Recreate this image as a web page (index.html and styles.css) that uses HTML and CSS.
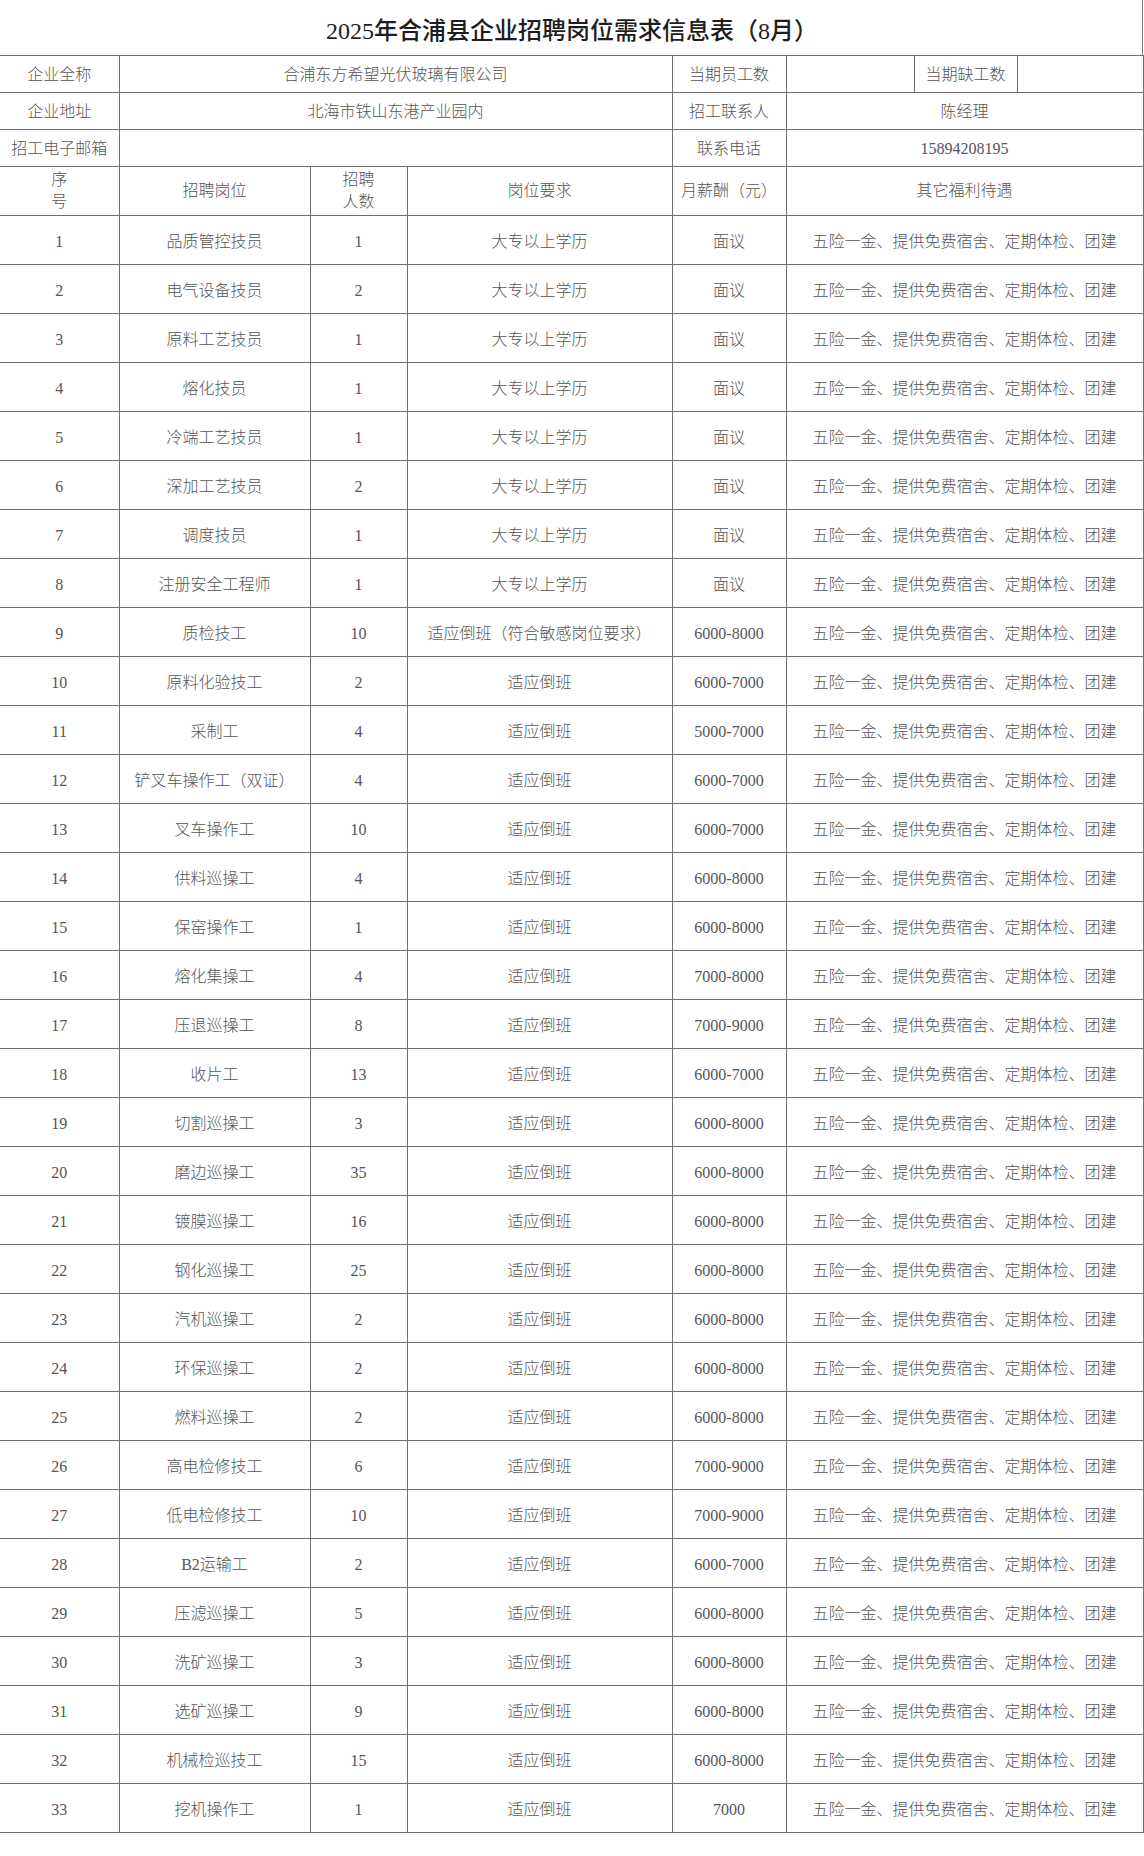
FILE: index.html
```html
<!DOCTYPE html>
<html lang="zh-CN">
<head>
<meta charset="utf-8">
<title>2025年合浦县企业招聘岗位需求信息表（8月）</title>
<link rel="stylesheet" href="styles.css">
</head>
<body>
<div class="page">
  <h1 class="title">2025年合浦县企业招聘岗位需求信息表（8月）</h1>
  <table class="sheet">
    <colgroup>
      <col class="c1"><col class="c2"><col class="c3"><col class="c4"><col class="c5"><col class="c6"><col class="c7"><col class="c8">
    </colgroup>
    <tbody>
      <tr class="info">
        <td class="first">企业全称</td>
        <td colspan="3">合浦东方希望光伏玻璃有限公司</td>
        <td>当期员工数</td>
        <td></td>
        <td>当期缺工数</td>
        <td></td>
      </tr>
      <tr class="info">
        <td class="first">企业地址</td>
        <td colspan="3">北海市铁山东港产业园内</td>
        <td>招工联系人</td>
        <td colspan="3">陈经理</td>
      </tr>
      <tr class="info">
        <td class="first">招工电子邮箱</td>
        <td colspan="3"></td>
        <td>联系电话</td>
        <td colspan="3" class="num">15894208195</td>
      </tr>
      <tr class="head">
        <td class="first two">序<br>号</td>
        <td>招聘岗位</td>
        <td class="soft two">招聘<br>人数</td>
        <td class="soft">岗位要求</td>
        <td>月薪酬（元）</td>
        <td colspan="3">其它福利待遇</td>
      </tr>
      <tr><td class="first">1</td><td>品质管控技员</td><td class="soft">1</td><td class="soft">大专以上学历</td><td>面议</td><td colspan="3">五险一金、提供免费宿舍、定期体检、团建</td></tr>
      <tr><td class="first">2</td><td>电气设备技员</td><td class="soft">2</td><td class="soft">大专以上学历</td><td>面议</td><td colspan="3">五险一金、提供免费宿舍、定期体检、团建</td></tr>
      <tr><td class="first">3</td><td>原料工艺技员</td><td class="soft">1</td><td class="soft">大专以上学历</td><td>面议</td><td colspan="3">五险一金、提供免费宿舍、定期体检、团建</td></tr>
      <tr><td class="first">4</td><td>熔化技员</td><td class="soft">1</td><td class="soft">大专以上学历</td><td>面议</td><td colspan="3">五险一金、提供免费宿舍、定期体检、团建</td></tr>
      <tr><td class="first">5</td><td>冷端工艺技员</td><td class="soft">1</td><td class="soft">大专以上学历</td><td>面议</td><td colspan="3">五险一金、提供免费宿舍、定期体检、团建</td></tr>
      <tr><td class="first">6</td><td>深加工艺技员</td><td class="soft">2</td><td class="soft">大专以上学历</td><td>面议</td><td colspan="3">五险一金、提供免费宿舍、定期体检、团建</td></tr>
      <tr><td class="first">7</td><td>调度技员</td><td class="soft">1</td><td class="soft">大专以上学历</td><td>面议</td><td colspan="3">五险一金、提供免费宿舍、定期体检、团建</td></tr>
      <tr><td class="first">8</td><td>注册安全工程师</td><td class="soft">1</td><td class="soft">大专以上学历</td><td>面议</td><td colspan="3">五险一金、提供免费宿舍、定期体检、团建</td></tr>
      <tr><td class="first">9</td><td>质检技工</td><td class="soft">10</td><td class="soft">适应倒班（符合敏感岗位要求）</td><td>6000-8000</td><td colspan="3">五险一金、提供免费宿舍、定期体检、团建</td></tr>
      <tr><td class="first">10</td><td>原料化验技工</td><td class="soft">2</td><td class="soft">适应倒班</td><td>6000-7000</td><td colspan="3">五险一金、提供免费宿舍、定期体检、团建</td></tr>
      <tr><td class="first">11</td><td>采制工</td><td class="soft">4</td><td class="soft">适应倒班</td><td>5000-7000</td><td colspan="3">五险一金、提供免费宿舍、定期体检、团建</td></tr>
      <tr><td class="first">12</td><td>铲叉车操作工（双证）</td><td class="soft">4</td><td class="soft">适应倒班</td><td>6000-7000</td><td colspan="3">五险一金、提供免费宿舍、定期体检、团建</td></tr>
      <tr><td class="first">13</td><td>叉车操作工</td><td class="soft">10</td><td class="soft">适应倒班</td><td>6000-7000</td><td colspan="3">五险一金、提供免费宿舍、定期体检、团建</td></tr>
      <tr><td class="first">14</td><td>供料巡操工</td><td class="soft">4</td><td class="soft">适应倒班</td><td>6000-8000</td><td colspan="3">五险一金、提供免费宿舍、定期体检、团建</td></tr>
      <tr><td class="first">15</td><td>保窑操作工</td><td class="soft">1</td><td class="soft">适应倒班</td><td>6000-8000</td><td colspan="3">五险一金、提供免费宿舍、定期体检、团建</td></tr>
      <tr><td class="first">16</td><td>熔化集操工</td><td class="soft">4</td><td class="soft">适应倒班</td><td>7000-8000</td><td colspan="3">五险一金、提供免费宿舍、定期体检、团建</td></tr>
      <tr><td class="first">17</td><td>压退巡操工</td><td class="soft">8</td><td class="soft">适应倒班</td><td>7000-9000</td><td colspan="3">五险一金、提供免费宿舍、定期体检、团建</td></tr>
      <tr><td class="first">18</td><td>收片工</td><td class="soft">13</td><td class="soft">适应倒班</td><td>6000-7000</td><td colspan="3">五险一金、提供免费宿舍、定期体检、团建</td></tr>
      <tr><td class="first">19</td><td>切割巡操工</td><td class="soft">3</td><td class="soft">适应倒班</td><td>6000-8000</td><td colspan="3">五险一金、提供免费宿舍、定期体检、团建</td></tr>
      <tr><td class="first">20</td><td>磨边巡操工</td><td class="soft">35</td><td class="soft">适应倒班</td><td>6000-8000</td><td colspan="3">五险一金、提供免费宿舍、定期体检、团建</td></tr>
      <tr><td class="first">21</td><td>镀膜巡操工</td><td class="soft">16</td><td class="soft">适应倒班</td><td>6000-8000</td><td colspan="3">五险一金、提供免费宿舍、定期体检、团建</td></tr>
      <tr><td class="first">22</td><td>钢化巡操工</td><td class="soft">25</td><td class="soft">适应倒班</td><td>6000-8000</td><td colspan="3">五险一金、提供免费宿舍、定期体检、团建</td></tr>
      <tr><td class="first">23</td><td>汽机巡操工</td><td class="soft">2</td><td class="soft">适应倒班</td><td>6000-8000</td><td colspan="3">五险一金、提供免费宿舍、定期体检、团建</td></tr>
      <tr><td class="first">24</td><td>环保巡操工</td><td class="soft">2</td><td class="soft">适应倒班</td><td>6000-8000</td><td colspan="3">五险一金、提供免费宿舍、定期体检、团建</td></tr>
      <tr><td class="first">25</td><td>燃料巡操工</td><td class="soft">2</td><td class="soft">适应倒班</td><td>6000-8000</td><td colspan="3">五险一金、提供免费宿舍、定期体检、团建</td></tr>
      <tr><td class="first">26</td><td>高电检修技工</td><td class="soft">6</td><td class="soft">适应倒班</td><td>7000-9000</td><td colspan="3">五险一金、提供免费宿舍、定期体检、团建</td></tr>
      <tr><td class="first">27</td><td>低电检修技工</td><td class="soft">10</td><td class="soft">适应倒班</td><td>7000-9000</td><td colspan="3">五险一金、提供免费宿舍、定期体检、团建</td></tr>
      <tr><td class="first">28</td><td>B2运输工</td><td class="soft">2</td><td class="soft">适应倒班</td><td>6000-7000</td><td colspan="3">五险一金、提供免费宿舍、定期体检、团建</td></tr>
      <tr><td class="first">29</td><td>压滤巡操工</td><td class="soft">5</td><td class="soft">适应倒班</td><td>6000-8000</td><td colspan="3">五险一金、提供免费宿舍、定期体检、团建</td></tr>
      <tr><td class="first">30</td><td>洗矿巡操工</td><td class="soft">3</td><td class="soft">适应倒班</td><td>6000-8000</td><td colspan="3">五险一金、提供免费宿舍、定期体检、团建</td></tr>
      <tr><td class="first">31</td><td>选矿巡操工</td><td class="soft">9</td><td class="soft">适应倒班</td><td>6000-8000</td><td colspan="3">五险一金、提供免费宿舍、定期体检、团建</td></tr>
      <tr><td class="first">32</td><td>机械检巡技工</td><td class="soft">15</td><td class="soft">适应倒班</td><td>6000-8000</td><td colspan="3">五险一金、提供免费宿舍、定期体检、团建</td></tr>
      <tr><td class="first">33</td><td>挖机操作工</td><td class="soft">1</td><td class="soft">适应倒班</td><td>7000</td><td colspan="3">五险一金、提供免费宿舍、定期体检、团建</td></tr>
    </tbody>
  </table>
</div>
</body>
</html>
```

FILE: styles.css
```css
html, body {
  margin: 0;
  padding: 0;
  background: #ffffff;
}

.page {
  width: 1143px;
  font-family: "Liberation Serif", "Noto Sans CJK SC", serif;
  color: #505050;
}

.title {
  margin: 0;
  height: 55px;
  box-sizing: border-box;
  border-right: 1px solid #777;
  display: flex;
  align-items: center;
  justify-content: center;
  font-size: 24px;
  font-weight: 500;
  color: #1e1e1e;
  padding-top: 2px;
  padding-left: 2px;
}

.sheet {
  border-collapse: collapse;
  table-layout: fixed;
  width: 1143px;
}

.c1 { width: 119px; }
.c2 { width: 191px; }
.c3 { width: 97px; }
.c4 { width: 265px; }
.c5 { width: 114px; }
.c6 { width: 128px; }
.c7 { width: 103px; }
.c8 { width: 126px; }

.sheet td {
  border: 1px solid #6e6e6e;
  padding: 0;
  text-align: center;
  vertical-align: middle;
  font-size: 16px;
  font-weight: 300;
  line-height: 1;
  white-space: nowrap;
  overflow: hidden;
  height: 49px;
  padding-top: 4px;
  box-sizing: border-box;
  color: #555555;
}

.sheet td.first {
  border-left: none;
}

.sheet td.soft {
  border-left-color: #a8a8a8;
}

.sheet tr.info td {
  height: 37px;
  padding-top: 2px;
}

.sheet tr.head td {
  height: 49px;
  padding-top: 0;
}

.sheet tr.head td.two {
  line-height: 22px;
}
```
